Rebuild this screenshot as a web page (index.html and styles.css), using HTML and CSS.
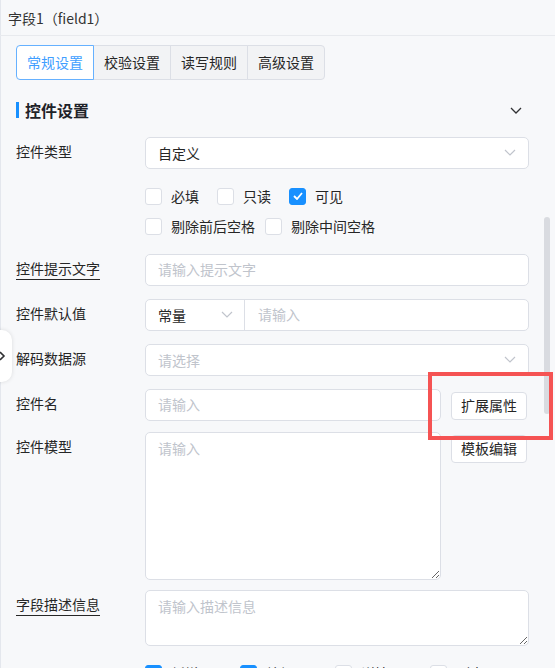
FILE: index.html
```html
<!DOCTYPE html>
<html>
<head>
    <meta charset="utf-8">
    <title>字段属性</title>
    <link rel="stylesheet" href="styles.css">
</head>
<body>
<div class="panel">
    <div class="panel-head">字段1（field1）</div>

    <div class="panel-body">
        <div class="tabs">
            <span class="tab active">常规设置</span>
            <span class="tab">校验设置</span>
            <span class="tab">读写规则</span>
            <span class="tab">高级设置</span>
        </div>

        <div class="section-title">
            <span class="section-name">控件设置</span>
            <svg class="section-arrow" width="12" height="7" viewBox="0 0 12 7"><polyline points="1,1 6,6 11,1" fill="none" stroke="#303133" stroke-width="1.3"/></svg>
        </div>

        <div class="form-item">
            <label class="item-label">控件类型</label>
            <div class="item-control">
                <div class="select">
                    <span>自定义</span>
                    <svg width="12" height="7" viewBox="0 0 12 7"><polyline points="1,1 6,6 11,1" fill="none" stroke="#c0c4cc" stroke-width="1.2"/></svg>
                </div>
                <div class="checks">
                    <div class="check-row">
                        <span class="check"><span class="box"></span>必填</span>
                        <span class="check"><span class="box"></span>只读</span>
                        <span class="check"><span class="box on"><svg width="10" height="8" viewBox="0 0 10 8"><polyline points="1,4 4,7 9,1" fill="none" stroke="#fff" stroke-width="1.8"/></svg></span>可见</span>
                    </div>
                    <div class="check-row tight">
                        <span class="check"><span class="box"></span>剔除前后空格</span>
                        <span class="check"><span class="box"></span>剔除中间空格</span>
                    </div>
                </div>
            </div>
        </div>

        <div class="form-item">
            <label class="item-label tip">控件提示文字</label>
            <div class="item-control">
                <input class="input" type="text" placeholder="请输入提示文字">
            </div>
        </div>

        <div class="form-item">
            <label class="item-label">控件默认值</label>
            <div class="item-control">
                <div class="group">
                    <div class="group-select">
                        <span>常量</span>
                        <svg width="12" height="7" viewBox="0 0 12 7"><polyline points="1,1 6,6 11,1" fill="none" stroke="#c0c4cc" stroke-width="1.2"/></svg>
                    </div>
                    <input class="group-input" type="text" placeholder="请输入">
                </div>
            </div>
        </div>

        <div class="form-item">
            <label class="item-label">解码数据源</label>
            <div class="item-control">
                <div class="select empty">
                    <span>请选择</span>
                    <svg width="12" height="7" viewBox="0 0 12 7"><polyline points="1,1 6,6 11,1" fill="none" stroke="#c0c4cc" stroke-width="1.2"/></svg>
                </div>
            </div>
        </div>

        <div class="form-item short">
            <label class="item-label">控件名</label>
            <div class="item-control with-btn">
                <input class="input" type="text" placeholder="请输入">
                <button class="btn">扩展属性</button>
            </div>
        </div>

        <div class="form-item model">
            <label class="item-label">控件模型</label>
            <div class="item-control with-btn">
                <textarea class="textarea big" placeholder="请输入"></textarea>
                <button class="btn">模板编辑</button>
            </div>
        </div>

        <div class="form-item desc">
            <label class="item-label tip">字段描述信息</label>
            <div class="item-control">
                <textarea class="textarea small" placeholder="请输入描述信息"></textarea>
            </div>
        </div>

        <div class="form-item">
            <span class="item-label"></span>
            <div class="item-control">
                <div class="check-row wide">
                    <span class="check"><span class="box on"><svg width="10" height="8" viewBox="0 0 10 8"><polyline points="1,4 4,7 9,1" fill="none" stroke="#fff" stroke-width="1.8"/></svg></span>新增显示</span>
                    <span class="check"><span class="box on"><svg width="10" height="8" viewBox="0 0 10 8"><polyline points="1,4 4,7 9,1" fill="none" stroke="#fff" stroke-width="1.8"/></svg></span>编辑显示</span>
                    <span class="check"><span class="box"></span>详情显示</span>
                    <span class="check"><span class="box"></span>列表显示</span>
                </div>
            </div>
        </div>
    </div>

    <!-- collapse handle on the left edge -->
    <div class="handle">
        <svg width="8" height="10" viewBox="0 0 8 10"><polyline points="2,1 6,5 2,9" fill="none" stroke="#303133" stroke-width="1.6"/></svg>
    </div>
    <div class="scroll-thumb"></div>
    <div class="mark"></div>
</div>
</body>
</html>
```

FILE: styles.css
```css
* { box-sizing: border-box; }
body { margin: 0; font-family: "Noto Sans CJK SC", "Noto Sans", sans-serif; font-size: 14px; color: #262626; background: #f7f8fa; }

.panel { position: relative; width: 555px; height: 668px; overflow: hidden; background: #f7f8fa; box-shadow: inset 1px 0 0 #e4e7ed; }
.panel-head { height: 36px; padding: 0 8px; line-height: 37px; color: #333; border-bottom: 1px solid #e8eaee; }
.panel-body { padding: 9px 26px 0 16px; }

/* tabs */
.tabs { display: flex; }
.tab { position: relative; height: 35px; line-height: 32px; padding: 0 10px; border: 1px solid #dcdfe6; background: #f2f3f5; margin-left: -1px; }
.tab:first-child { margin-left: 0; border-radius: 4px 0 0 4px; }
.tab:last-child { border-radius: 0 4px 4px 0; }
.tab.active { z-index: 1; background: #fff; color: #409eff; border-color: #66b1ff; border-radius: 4px 0 0 4px; }

.section-title { display: flex; align-items: center; height: 24px; margin: 18px 0 15px; }
.section-name { flex: 1; display: flex; align-items: center; font-size: 16px; font-weight: bold; color: #1f2329; }
.section-name::before { content: ""; width: 3px; height: 16px; background: #1890ff; margin-right: 6px; }
.section-arrow { margin-right: 7px; }

/* form rows */
.form-item { display: grid; grid-template-columns: 129px 1fr; margin-bottom: 13px; }
.form-item.short { margin-bottom: 11px; }
.form-item.model { margin-bottom: 10px; }
.form-item.desc { margin-bottom: 12px; }
.item-label { line-height: 28px; color: #262626; }
.item-label.tip { text-decoration: underline; text-underline-offset: 5px; }
.item-control { min-width: 0; }
.with-btn { display: flex; align-items: flex-start; padding-right: 2px; }

.select, .input, .group, .textarea { width: 100%; background: #fff; border: 1px solid #dcdfe6; border-radius: 5px; }
.select { height: 32px; display: flex; align-items: center; justify-content: space-between; padding: 0 12px 1px; }
.select.empty span { color: #c0c4cc; }
.input { height: 32px; padding: 0 12px 2px; font: inherit; color: #303133; outline: none; }
.input::placeholder, .group-input::placeholder, .textarea::placeholder { color: #c0c4cc; }

.group { height: 32px; display: flex; }
.group-select { width: 99px; display: flex; align-items: center; justify-content: space-between; padding: 0 11px 1px 12px; border-right: 1px solid #dcdfe6; }
.group-input { flex: 1; min-width: 0; border: 0; background: transparent; padding: 0 13px 2px; font: inherit; outline: none; }

.textarea { display: block; padding: 4px 12px; font: inherit; line-height: 22px; outline: none; resize: vertical; }
.textarea.big { flex: 1; height: 148px; }
.textarea.small { height: 56px; }

.btn { flex: none; width: 76px; height: 28px; margin: 3px 0 0 10px; padding: 0 0 2px; font: inherit; color: #262626; background: #fff; border: 1px solid #dcdfe6; border-radius: 4px; }

/* checkboxes */
.checks { margin-top: 12px; }
.check-row { display: flex; height: 30px; align-items: center; }
.check { display: flex; align-items: center; margin-right: 18px; white-space: nowrap; }
.check-row.tight .check { margin-right: 10px; }
.check-row.wide .check { margin-right: 13px; }
.box { width: 17px; height: 17px; margin-right: 9px; border: 1px solid #dcdfe6; border-radius: 3px; background: #fff; display: flex; align-items: center; justify-content: center; }
.box.on { background: #1890ff; border-color: #1890ff; }

/* overlays */
.handle { position: absolute; left: -10px; top: 330px; width: 22px; height: 52px; background: #fff; border-radius: 10px; box-shadow: 0 0 4px rgba(0, 0, 0, 0.12); display: flex; align-items: center; padding-left: 8px; }
.scroll-thumb { position: absolute; left: 544px; top: 217px; width: 6px; height: 197px; border-radius: 3px; background: #d9dbe0; }
.mark { position: absolute; left: 428px; top: 372px; width: 125px; height: 68px; border: 4px solid #f55353; }
```
